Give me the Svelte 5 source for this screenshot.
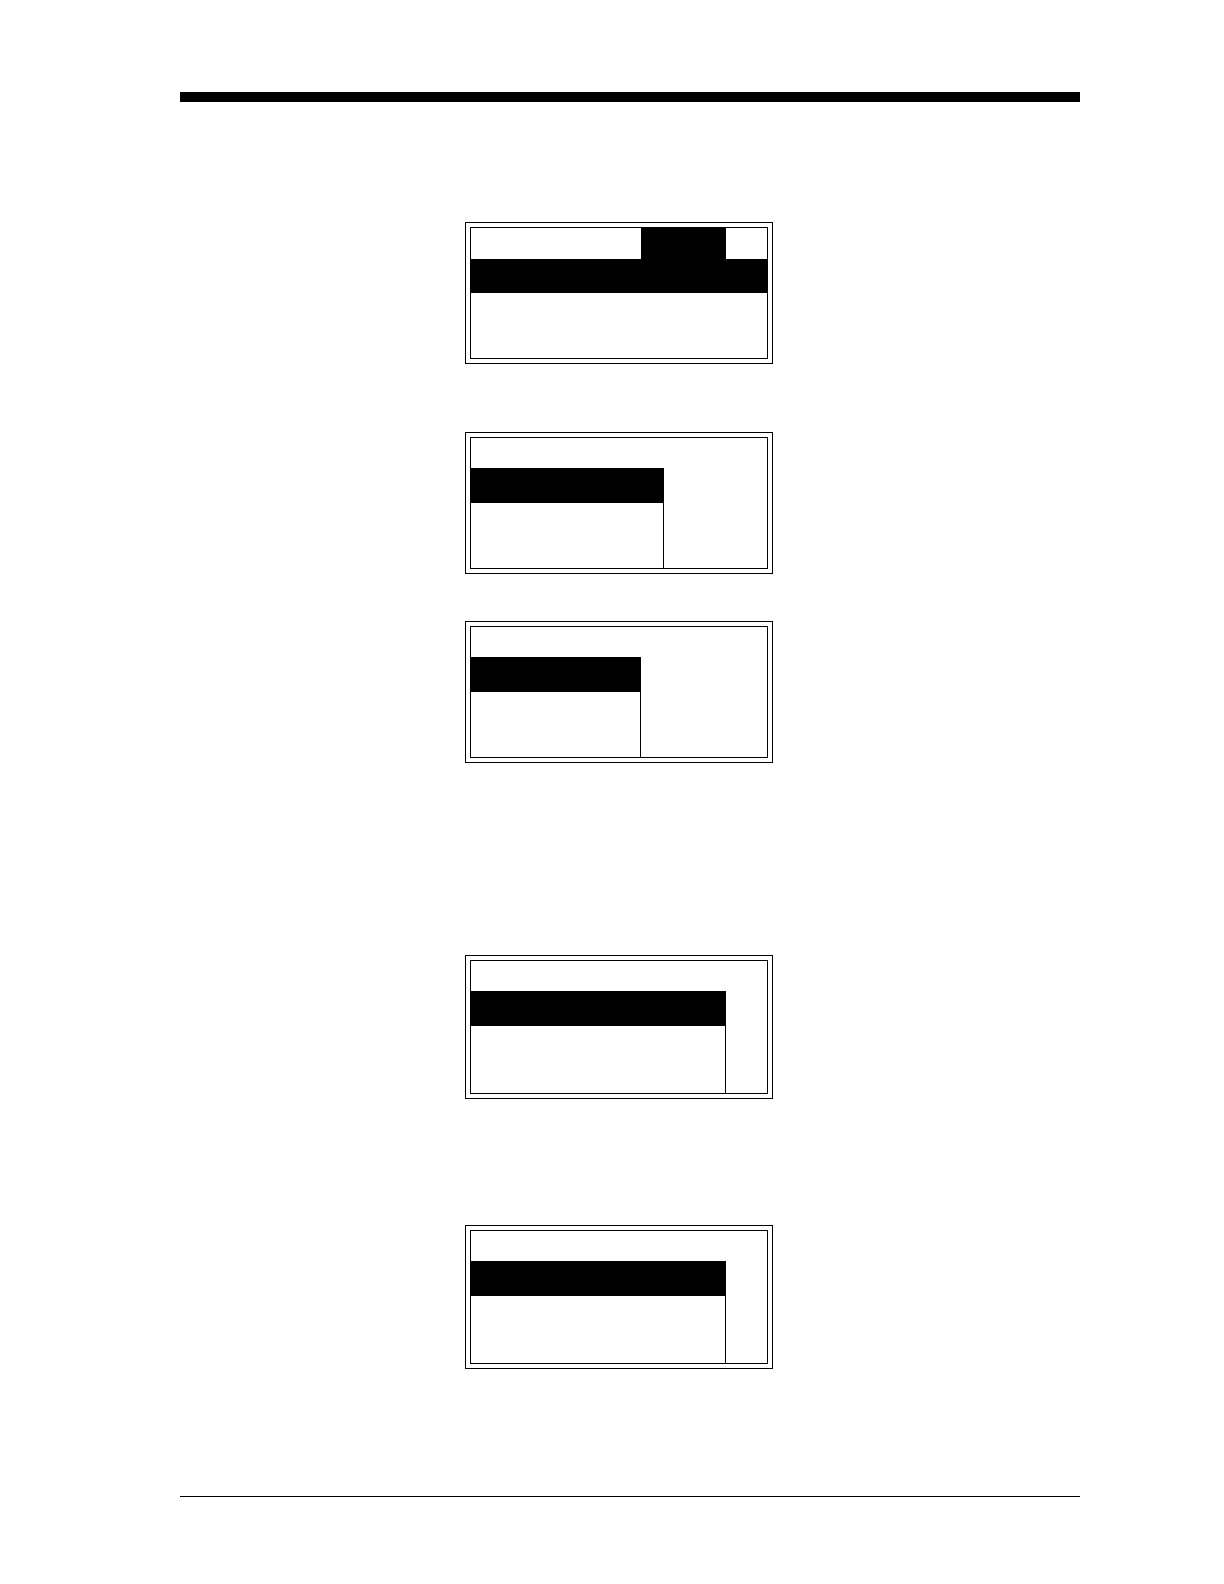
<script>
    // space: blank lines above the screen, list: width of the list column
    const screens = [
        { space: 120, tab: { start: 170, width: 85 }, head: 31, bar: 34, rest: 65 },
        { space: 68, list: 193, head: 30, bar: 35, rest: 65 },
        { space: 47, list: 170, head: 30, bar: 35, rest: 65 },
        { space: 192, list: 255, head: 30, bar: 35, rest: 67 },
        { space: 126, list: 255, head: 30, bar: 35, rest: 67 }
    ];
</script>

<div class="page">
    <header class="top-rule"></header>

    <main class="screens">
        {#each screens as screen}
            <div class="frame" style="margin-top: {screen.space}px">
                <div class="display">
                    <div class="head" style="height: {screen.head}px">
                        {#if screen.tab}
                            <div class="tab" style="width: {screen.tab.width}px; margin-left: {screen.tab.start}px"></div>
                        {/if}
                    </div>
                    <div class="list" class:divided={screen.list} style="width: {screen.list ? screen.list + 'px' : '100%'}">
                        <div class="selected" style="height: {screen.bar}px"></div>
                        <div class="items" style="height: {screen.rest}px"></div>
                    </div>
                </div>
            </div>
        {/each}
    </main>

    <footer class="bottom-rule"></footer>
</div>

<style>
    :global(body) {
        margin: 0;
        background: #fff;
    }

    .page {
        display: flex;
        flex-direction: column;
        padding: 92px 144px 87px 180px;
    }

    .top-rule {
        height: 10px;
        background: #000;
    }

    .screens {
        display: flex;
        flex-direction: column;
        align-items: center;
        padding-right: 22px;
        margin-bottom: 127px;
    }

    .frame {
        box-sizing: border-box;
        width: 308px;
        max-width: 100%;
        padding: 4px;
        border: 1px solid #000;
    }

    .display {
        border: 1px solid #000;
        overflow: hidden;
    }

    .head {
        display: flex;
    }

    .tab {
        background: #000;
    }

    .list {
        box-sizing: border-box;
    }

    .divided {
        border-right: 1px solid #000;
    }

    .selected {
        background: #000;
    }

    .bottom-rule {
        border-top: 1px solid #000;
    }
</style>
